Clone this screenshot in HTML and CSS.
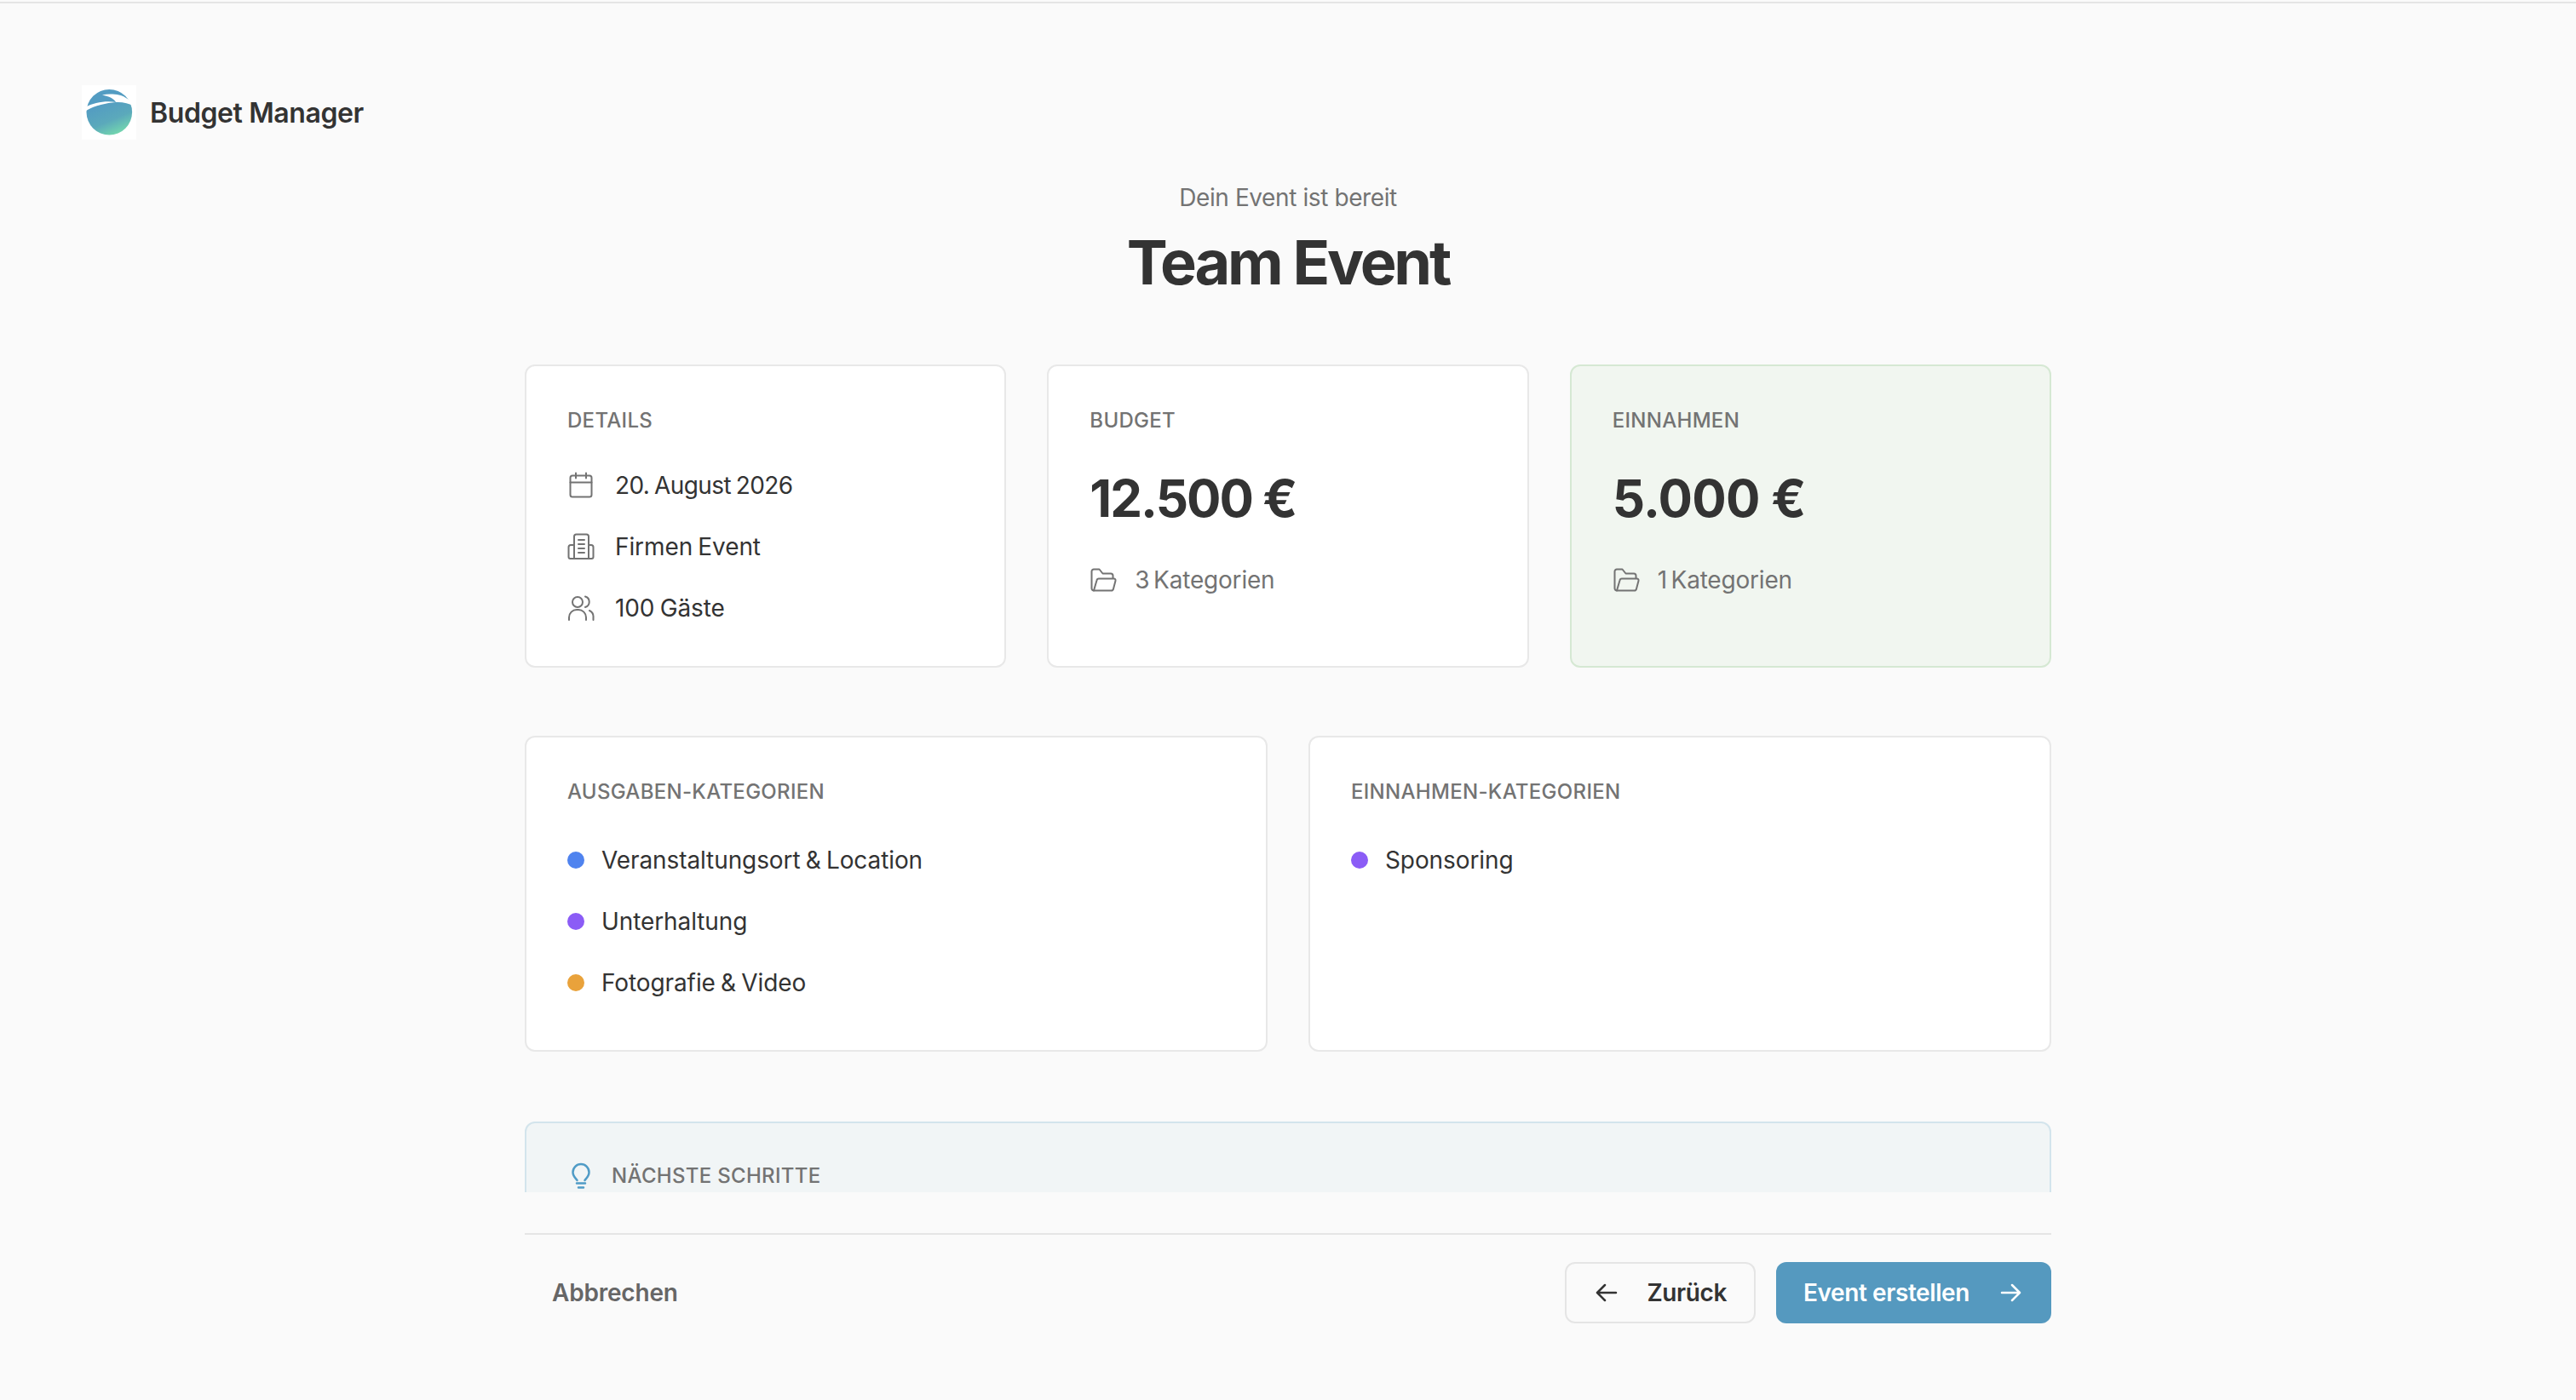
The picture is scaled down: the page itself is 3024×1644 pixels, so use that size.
FILE: index.html
```html
<!DOCTYPE html>
<html lang="de">
<head>
    <meta charset="UTF-8" />
    <meta name="viewport" content="width=device-width, initial-scale=1.0" />
    <title>Budget Manager</title>
    <link rel="stylesheet" href="styles.css">
</head>
<body>
<div class="page">
    <div class="topline"></div>

    <header class="header">
        <svg class="logo" viewBox="0 0 64 64">
            <defs>
                <linearGradient id="logoFill" x1="0.35" y1="0.3" x2="0.65" y2="1">
                    <stop offset="0" stop-color="#539cc2" />
                    <stop offset="0.55" stop-color="#5ba9bb" />
                    <stop offset="1" stop-color="#74d8ae" />
                </linearGradient>
            </defs>
            <rect width="64" height="64" fill="#fff" />
            <ellipse cx="32.3" cy="31.8" rx="26.8" ry="26.8" fill="url(#logoFill)" />
            <path d="M4 26 C14 20.5 28 18 40 20 C29 21 16 23.5 5 30 Z" fill="#fff" />
            <path d="M24 11.5 C34 9.5 46 11 51 14.5 L62 21 L62 25 C55 21 47 19.5 40 20 C38 16 32 13 24 11.5 Z" fill="#fff" />
        </svg>
        <span class="brand">Budget Manager</span>
    </header>

    <main class="content">
        <div class="intro">
            <p class="intro-sub">Dein Event ist bereit</p>
            <h1 class="intro-title">Team Event</h1>
        </div>

        <section class="grid-three">
            <div class="card">
                <div class="label">Details</div>
                <div class="row row-date">
                    <svg class="icon" viewBox="0 0 32 32">
                        <rect x="3.5" y="4.5" width="25" height="25" rx="2.5" />
                        <path d="M3.5 12.5h25M10 1.5v6M22 1.5v6" />
                    </svg>
                    <span>20. August 2026</span>
                </div>
                <div class="row">
                    <svg class="icon" viewBox="0 0 32 32">
                        <path d="M8 30V4a2.5 2.5 0 0 1 2.5-2.5h12A2.5 2.5 0 0 1 25 4v26" />
                        <path d="M8 14H4a2.5 2.5 0 0 0-2.5 2.5V28a2 2 0 0 0 2 2h25a2 2 0 0 0 2-2V16.5A2.5 2.5 0 0 0 28 14h-3" />
                        <path d="M13 8h7M13 13h7M13 18h7M13 23h7" />
                    </svg>
                    <span>Firmen Event</span>
                </div>
                <div class="row">
                    <svg class="icon" viewBox="0 0 32 32">
                        <circle cx="12" cy="9" r="6" />
                        <path d="M2 30v-3a9 9 0 0 1 9-9h2a9 9 0 0 1 9 9v3" />
                        <path d="M21 2.5a6.5 6.5 0 0 1 0 12.500M26 19a8 8 0 0 1 4.5 8v3" />
                    </svg>
                    <span>100 Gäste</span>
                </div>
            </div>

            <div class="card">
                <div class="label">Budget</div>
                <div class="amount amount-tight">12.500 €</div>
                <div class="row row-muted">
                    <svg class="icon" viewBox="0 0 32 32">
                        <path d="M5 28.5a2.5 2.5 0 0 1-2.5-2.5V6A2.5 2.5 0 0 1 5 3.5h6.5l4 5H25a2.5 2.5 0 0 1 2.5 2.5v3" />
                        <path d="M5 28.5l3.5-12a2.5 2.5 0 0 1 2.5-2h17.500a2 2 0 0 1 2 2.5l-2.5 9.500a2.5 2.5 0 0 1-2.5 2z" />
                    </svg>
                    <span>3 Kategorien</span>
                </div>
            </div>

            <div class="card card-green">
                <div class="label">Einnahmen</div>
                <div class="amount">5.000 €</div>
                <div class="row row-muted">
                    <svg class="icon" viewBox="0 0 32 32">
                        <path d="M5 28.5a2.5 2.5 0 0 1-2.5-2.5V6A2.5 2.5 0 0 1 5 3.5h6.5l4 5H25a2.5 2.5 0 0 1 2.5 2.5v3" />
                        <path d="M5 28.5l3.5-12a2.5 2.5 0 0 1 2.5-2h17.500a2 2 0 0 1 2 2.5l-2.5 9.500a2.5 2.5 0 0 1-2.5 2z" />
                    </svg>
                    <span>1 Kategorien</span>
                </div>
            </div>
        </section>

        <section class="grid-two">
            <div class="card card-list">
                <div class="label">Ausgaben-Kategorien</div>
                <div class="row row-dot"><span class="dot dot-blue"></span><span>Veranstaltungsort &amp; Location</span></div>
                <div class="row row-dot"><span class="dot dot-purple"></span><span>Unterhaltung</span></div>
                <div class="row row-dot"><span class="dot dot-orange"></span><span>Fotografie &amp; Video</span></div>
            </div>
            <div class="card card-list">
                <div class="label">Einnahmen-Kategorien</div>
                <div class="row row-dot"><span class="dot dot-purple"></span><span>Sponsoring</span></div>
            </div>
        </section>

        <section class="card card-blue">
            <div class="next-head">
                <svg class="icon icon-blue" viewBox="0 0 32 32">
                    <path d="M11.5 21C9.500 18.500 6.500 16 6.500 11.500a9.500 9.500 0 0 1 19 0C25.500 16 22.500 18.500 20.500 21" />
                    <path d="M11 24.500h10M13 29.500h6" />
                </svg>
                <span class="label">Nächste Schritte</span>
            </div>
        </section>
    </main>

    <footer class="footer">
        <button class="btn btn-text">Abbrechen</button>
        <div class="footer-right">
            <button class="btn btn-outline">
                <svg class="icon icon-btn" viewBox="0 0 32 32"><path d="M28 16H6M15 7l-9 9 9 9" /></svg>
                Zurück
            </button>
            <button class="btn btn-primary">
                Event erstellen
                <svg class="icon icon-btn" viewBox="0 0 32 32"><path d="M6 16h21M18 7l9 9-9 9" /></svg>
            </button>
        </div>
    </footer>
</div>
</body>
</html>
```

FILE: styles.css
```css
* {
    box-sizing: border-box;
}

html, body {
    margin: 0;
    height: 100%;
}

body {
    font-family: Inter, "Liberation Sans", sans-serif;
    background-color: #fafafa;
    color: #333;
    overflow: hidden;
}

.page {
    display: flex;
    flex-direction: column;
    height: 100vh;
}

.topline {
    flex: none;
    height: 2px;
    margin-top: 2px;
    background-color: #e5e5e5;
}

.header {
    flex: none;
    display: flex;
    align-items: center;
    gap: 16px;
    padding: 96px 96px 0;
}

.logo {
    width: 64px;
    height: 64px;
}

.brand {
    font-size: 32px;
    font-weight: 600;
    letter-spacing: -0.4px;
}

.content {
    flex: 1;
    min-height: 0;
    width: 1792px;
    margin: 0 auto;
    overflow: hidden;
}

.intro {
    padding-top: 48px;
    text-align: center;
}

.intro-sub {
    margin: 0;
    font-size: 28px;
    line-height: 40px;
    letter-spacing: -0.4px;
    color: #737373;
}

.intro-title {
    margin: 16px 0 0;
    font-size: 72px;
    line-height: 80px;
    font-weight: 650;
    letter-spacing: -3.2px;
}

.grid-three {
    display: grid;
    grid-template-columns: repeat(3, 1fr);
    gap: 48px;
    margin-top: 80px;
}

.grid-two {
    display: grid;
    grid-template-columns: repeat(2, 1fr);
    gap: 48px;
    margin-top: 80px;
}

.card {
    background-color: #fff;
    border: 2px solid #e8e8e8;
    border-radius: 12px;
    padding: 48px;
}

.card-green {
    background-color: #f1f6f0;
    border-color: #d5e8d3;
}

.card-blue {
    margin-top: 82px;
    background-color: #f1f5f6;
    border-color: #d3e4ec;
    height: 200px;
}

.card-list {
    height: 371px;
}

.label {
    font-size: 24px;
    line-height: 32px;
    font-weight: 500;
    letter-spacing: 0.3px;
    color: #737373;
    text-transform: uppercase;
}

.row {
    display: flex;
    align-items: center;
    gap: 24px;
    height: 40px;
    margin-top: 32px;
    font-size: 28px;
    letter-spacing: -0.1px;
    word-spacing: -1.5px;
}

.label + .row {
    margin-top: 40px;
}

.card-list .label + .row {
    margin-top: 44px;
}

.row-date {
    letter-spacing: -0.6px;
}

.row-muted {
    gap: 21px;
    color: #737373;
    letter-spacing: -0.2px;
    word-spacing: -3px;
}

.row-dot {
    gap: 20px;
}

.icon {
    flex: none;
    width: 32px;
    height: 32px;
    fill: none;
    stroke: #737373;
    stroke-width: 2;
    stroke-linecap: round;
    stroke-linejoin: round;
}

.icon-blue {
    stroke: #4f9bc6;
    stroke-width: 2.5;
}

.icon-btn {
    stroke: currentColor;
    stroke-width: 2.5;
}

.amount {
    margin-top: 39px;
    font-size: 60px;
    line-height: 72px;
    font-weight: 700;
    letter-spacing: -0.7px;
}

.amount-tight {
    letter-spacing: -2px;
}

.amount + .row {
    margin-top: 40px;
}

.dot {
    flex: none;
    width: 20px;
    height: 20px;
    border-radius: 50%;
}

.dot-blue {
    background-color: #4f83ef;
}

.dot-purple {
    background-color: #8b5cf6;
}

.dot-orange {
    background-color: #e9a23b;
}

.next-head {
    display: flex;
    align-items: center;
    gap: 20px;
    margin-top: -2px;
}

.footer {
    flex: none;
    width: 1792px;
    margin: 48px auto 90px;
    padding-top: 32px;
    border-top: 2px solid #e5e5e5;
    display: flex;
    align-items: center;
    justify-content: space-between;
}

.footer-right {
    display: flex;
    gap: 24px;
}

.btn {
    display: flex;
    align-items: center;
    gap: 32px;
    height: 72px;
    padding: 0 32px;
    border: none;
    border-radius: 12px;
    background: none;
    font-family: inherit;
    font-size: 28px;
    font-weight: 600;
    letter-spacing: -0.4px;
    color: #333;
}

.btn-text {
    letter-spacing: -0.2px;
    color: #666;
}

.btn-outline {
    border: 2px solid #e5e5e5;
    padding: 0 32px 0 30px;
}

.btn-primary {
    background-color: #5599bf;
    color: #fff;
}
```
